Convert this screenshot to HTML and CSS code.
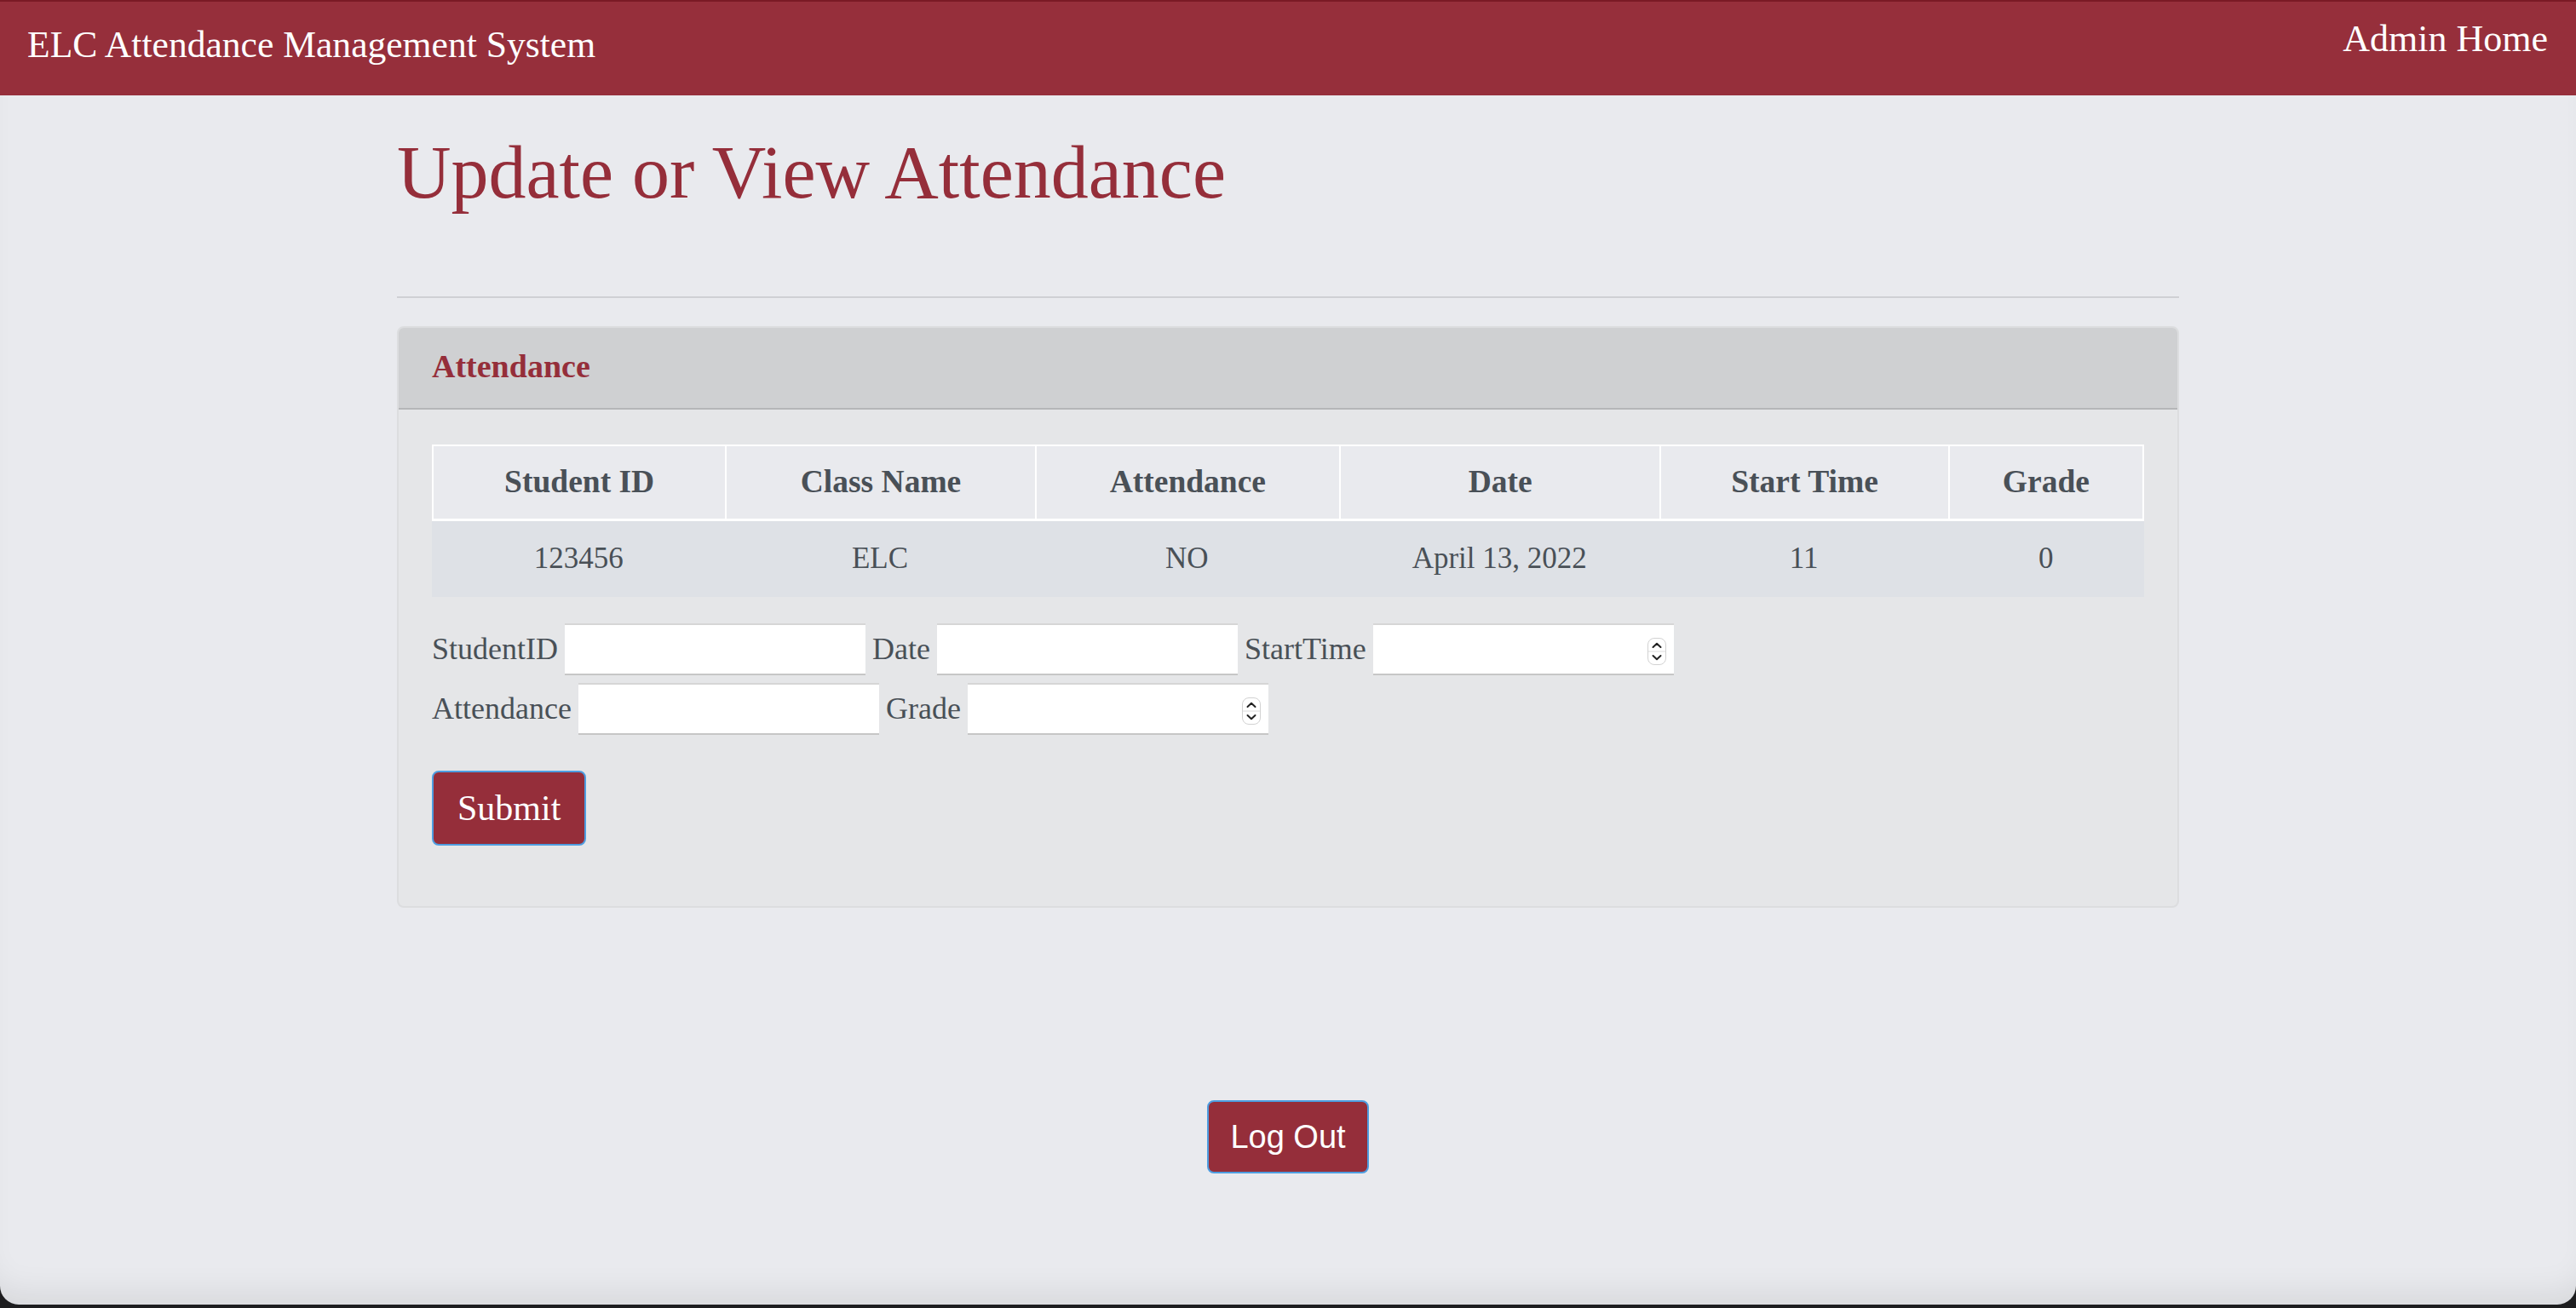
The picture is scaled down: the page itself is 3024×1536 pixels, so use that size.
FILE: index.html
```html
<!DOCTYPE html>
<html lang="en">
<head>
<meta charset="utf-8">
<title>Update or View Attendance</title>
<link rel="stylesheet" href="styles.css">
</head>
<body>
<div class="window">
  <nav class="navbar">
    <a class="brand" href="#">ELC Attendance Management System</a>
    <a class="nav-link" href="#">Admin Home</a>
  </nav>
  <main class="container">
    <h1 class="page-title">Update or View Attendance</h1>
    <hr class="divider">
    <section class="card">
      <div class="card-header">Attendance</div>
      <div class="card-body">
        <table class="att-table">
          <colgroup>
            <col class="c1"><col class="c2"><col class="c3"><col class="c4"><col class="c5"><col class="c6">
          </colgroup>
          <thead>
            <tr><th>Student ID</th><th>Class Name</th><th>Attendance</th><th>Date</th><th>Start Time</th><th class="last">Grade</th></tr>
          </thead>
          <tbody>
            <tr><td>123456</td><td>ELC</td><td>NO</td><td>April 13, 2022</td><td>11</td><td>0</td></tr>
          </tbody>
        </table>
        <form class="att-form">
          <div class="form-row">
            <label class="lbl">StudentID</label><input class="inp" type="text">
            <label class="lbl">Date</label><input class="inp" type="text">
            <label class="lbl">StartTime</label>
            <span class="num"><input class="inp" type="text"><svg class="spin" width="22" height="32" viewBox="0 0 22 32"><rect x="0.5" y="0.5" width="21" height="31" rx="7.5" fill="#fff" stroke="#d2d2d2"/><line x1="1" y1="16" x2="21" y2="16" stroke="#dcdcdc"/><path d="M6.5 11 L11 6.8 L15.5 11" fill="none" stroke="#222" stroke-width="2" stroke-linecap="round" stroke-linejoin="round"/><path d="M6.5 21 L11 25.2 L15.5 21" fill="none" stroke="#222" stroke-width="2" stroke-linecap="round" stroke-linejoin="round"/></svg></span>
          </div>
          <div class="form-row row2">
            <label class="lbl">Attendance</label><input class="inp" type="text">
            <label class="lbl">Grade</label>
            <span class="num"><input class="inp" type="text"><svg class="spin" width="22" height="32" viewBox="0 0 22 32"><rect x="0.5" y="0.5" width="21" height="31" rx="7.5" fill="#fff" stroke="#d2d2d2"/><line x1="1" y1="16" x2="21" y2="16" stroke="#dcdcdc"/><path d="M6.5 11 L11 6.8 L15.5 11" fill="none" stroke="#222" stroke-width="2" stroke-linecap="round" stroke-linejoin="round"/><path d="M6.5 21 L11 25.2 L15.5 21" fill="none" stroke="#222" stroke-width="2" stroke-linecap="round" stroke-linejoin="round"/></svg></span>
          </div>
          <button class="btn btn-submit" type="button">Submit</button>
        </form>
      </div>
    </section>
    <div class="logout-wrap">
      <button class="btn btn-logout" type="button">Log Out</button>
    </div>
  </main>
</div>
</body>
</html>
```

FILE: styles.css
```css
html, body {
  margin: 0;
  padding: 0;
  height: 1536px;
  overflow: hidden;
  background: #1d1d1f;
}

.window {
  height: 1532px;
  background: #e9eaee;
  border-radius: 0 0 22px 22px;
  overflow: hidden;
  box-shadow: inset 0 -34px 40px -24px rgba(0, 0, 0, 0.09);
  font-family: "Liberation Serif", "Times New Roman", serif;
}

.navbar {
  display: flex;
  justify-content: space-between;
  align-items: flex-start;
  height: 110px;
  background: #962f3b;
  border-top: 2px solid #7a1a25;
  padding: 0 33px 0 32px;
}

.brand {
  margin-top: 29px;
  font-size: 43.6px;
  line-height: 1;
  color: #fff;
  text-decoration: none;
}

.nav-link {
  margin-top: 22px;
  font-size: 44px;
  line-height: 1;
  color: #fff;
  text-decoration: none;
}

.container {
  width: 2092px;
  margin: 0 auto;
}

.page-title {
  margin: 47px 0 0;
  font-size: 88px;
  font-weight: 400;
  line-height: 1;
  color: #952e3a;
}

.divider {
  margin: 101px 0 0;
  border: 0;
  border-top: 2px solid #cfd0d4;
  height: 0;
}

.card {
  margin-top: 33px;
  border: 2px solid #dcdddf;
  border-radius: 8px;
  background: #e5e6e8;
  overflow: hidden;
}

.card-header {
  background: #cfd0d2;
  border-bottom: 2px solid #b5b6b8;
  padding: 26px 40px 30px 39px;
  font-size: 38px;
  font-weight: 700;
  line-height: 1;
  color: #952e3a;
}

.card-body {
  padding: 41px 39px 39px;
}

.att-table {
  width: 100%;
  table-layout: fixed;
  border-collapse: separate;
  border-spacing: 0;
  margin-bottom: 31px;
  color: #495057;
}

.c1 { width: 344px; }
.c2 { width: 363px; }
.c3 { width: 357px; }
.c4 { width: 376px; }
.c5 { width: 338px; }
.c6 { width: 230px; }

.att-table th {
  background: #e9eaee;
  border-top: 2px solid #fff;
  border-left: 2px solid #fff;
  border-bottom: 3px solid #fff;
  padding: 23px 10px 24px;
  font-size: 37.5px;
  font-weight: 700;
  line-height: 1;
  text-align: center;
}

.att-table th.last {
  border-right: 2px solid #fff;
}

.att-table td {
  background: #dee1e6;
  padding: 26px 10px 28px;
  font-size: 35px;
  line-height: 1;
  text-align: center;
}

.att-form {
  margin: 0 0 32px;
}

.form-row {
  display: flex;
  align-items: center;
  gap: 8px;
  height: 61px;
}

.row2 {
  margin-top: 9px;
}

.lbl {
  font-size: 36px;
  line-height: 1;
  color: #495057;
}

.inp {
  display: block;
  box-sizing: border-box;
  width: 353px;
  height: 61px;
  margin: 0;
  padding: 0 12px;
  border: 0;
  border-top: 2px solid #d6d6d6;
  border-bottom: 2px solid #c6c6c6;
  background: #fff;
  font-size: 35px;
}

.num {
  position: relative;
  display: block;
}

.spin {
  position: absolute;
  right: 9px;
  top: 17px;
}

.btn {
  display: inline-flex;
  align-items: center;
  justify-content: center;
  box-sizing: border-box;
  background: #952e3a;
  border: 2px solid #4e9de0;
  border-radius: 8px;
  color: #fff;
  cursor: pointer;
}

.btn-submit {
  margin-top: 42px;
  height: 88px;
  padding: 0 28px;
  font-family: "Liberation Serif", "Times New Roman", serif;
  font-size: 42px;
  line-height: 1;
}

.logout-wrap {
  display: flex;
  justify-content: center;
  margin-top: 226px;
}

.btn-logout {
  height: 86px;
  width: 190px;
  padding: 0;
  font-family: "Liberation Sans", Arial, sans-serif;
  font-size: 38px;
  line-height: 1;
}
```
